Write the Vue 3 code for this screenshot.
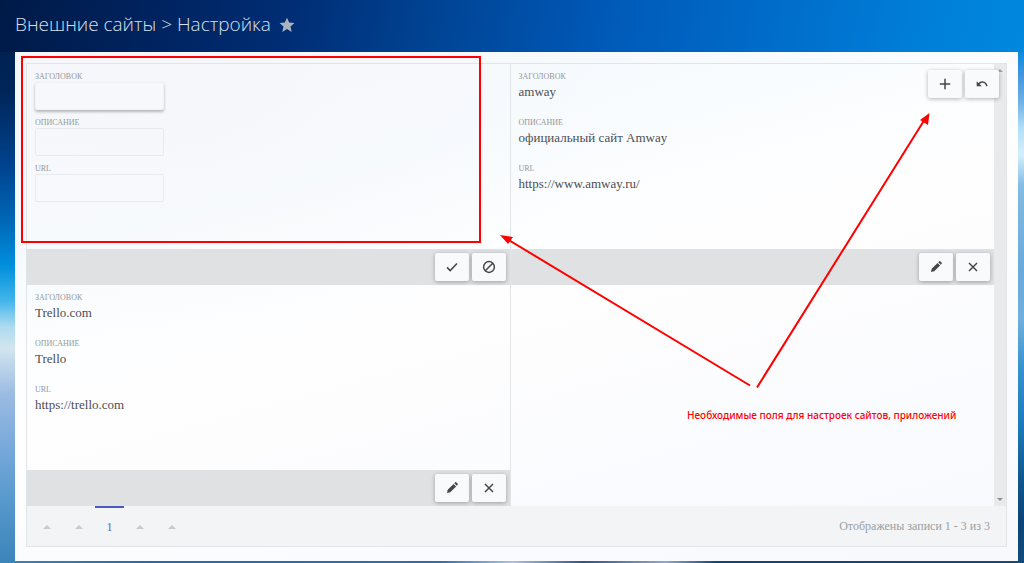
<script setup>
import { ref } from 'vue'

const form = ref({ title: '', description: '', url: '' })
const fields = [
  { key: 'title', label: 'Заголовок' },
  { key: 'description', label: 'Описание' },
  { key: 'url', label: 'URL' }
]
const sites = [
  { title: 'amway', description: 'официальный сайт Amway', url: 'https://www.amway.ru/' },
  { title: 'Trello.com', description: 'Trello', url: 'https://trello.com' }
]
</script>

<template>
  <div class="page">
    <header class="header">
      <h1>Внешние сайты &gt; Настройка</h1>
      <button class="star" type="button" aria-label="В избранное">
        <svg viewBox="0 0 16 16" width="16" height="16"><path d="M8 .8 10.2 5.6 15.4 6.1 11.5 9.6 12.7 14.9 8 12.1 3.3 14.9 4.5 9.6.6 6.1 5.8 5.6Z" /></svg>
      </button>
    </header>

    <main class="panel">
      <section class="list">
        <div class="scroll-area">
          <div class="cards">
            <form class="card" @submit.prevent>
              <div class="card-body">
                <div v-for="f in fields" :key="f.key" class="field">
                  <label class="caption" :for="f.key">{{ f.label }}</label>
                  <input :id="f.key" v-model="form[f.key]" type="text" :class="{ raised: f.key === 'title' }" />
                </div>
              </div>
              <div class="card-actions">
                <button class="tool" type="submit" aria-label="Сохранить">
                  <svg viewBox="0 0 16 16"><path class="line" d="M3 8.4 6.2 11.6 13 4.6" /></svg>
                </button>
                <button class="tool" type="reset" aria-label="Отмена">
                  <svg viewBox="0 0 16 16"><circle class="line" cx="8" cy="8" r="5.4" /><path class="line" d="M4.3 11.7 11.7 4.3" /></svg>
                </button>
              </div>
            </form>

            <article v-for="s in sites" :key="s.url" class="card">
              <dl class="card-body">
                <div v-for="f in fields" :key="f.key" class="field">
                  <dt class="caption">{{ f.label }}</dt>
                  <dd>{{ s[f.key] }}</dd>
                </div>
              </dl>
              <div class="card-actions">
                <button class="tool" type="button" aria-label="Изменить">
                  <svg viewBox="0 0 16 16"><path d="M3 13 3.7 9.8 9.6 3.9 12.1 6.4 6.2 12.3ZM10.3 3.2 11.2 2.3Q11.7 1.9 12.2 2.3L13.7 3.8Q14.1 4.3 13.7 4.8L12.8 5.7Z" /></svg>
                </button>
                <button class="tool" type="button" aria-label="Удалить">
                  <svg viewBox="0 0 16 16"><path class="line" d="M4 4 12 12M12 4 4 12" /></svg>
                </button>
              </div>
            </article>
          </div>
          <div class="scrollbar">
            <i class="arrow up"></i>
            <i class="arrow down"></i>
          </div>
          <div class="floating">
            <button class="tool" type="button" aria-label="Добавить">
              <svg viewBox="0 0 16 16"><path class="line" d="M8 2.8V13.2M2.8 8H13.2" /></svg>
            </button>
            <button class="tool" type="button" aria-label="Вернуть">
              <svg viewBox="0 0 16 16"><path class="line" d="M4.3 8.2C7.5 4.8 11.8 5.4 12.9 10.2" /><path d="M2.7 5.2V10.2H7.8Z" /></svg>
            </button>
          </div>
        </div>

        <footer class="pager">
          <nav class="pages">
            <button type="button" aria-label="Первая"><i class="tri"></i></button>
            <button type="button" aria-label="Предыдущая"><i class="tri"></i></button>
            <button type="button" class="current">1</button>
            <button type="button" aria-label="Следующая"><i class="tri"></i></button>
            <button type="button" aria-label="Последняя"><i class="tri"></i></button>
          </nav>
          <span class="total">Отображены записи 1 - 3 из 3</span>
        </footer>
      </section>
    </main>

    <div class="frame"></div>
    <svg class="arrows" width="1024" height="563" viewBox="0 0 1024 563">
      <path class="shaft" d="M750 385.500 507 239M757 387.500 925 119" />
      <path class="head" d="M500 235 513 237 508 244ZM929.500 113 928 125 920 120Z" />
    </svg>
    <p class="note">Необходимые поля для настроек сайтов, приложений</p>
  </div>
</template>

<style>
body {
  margin: 0;
}
</style>

<style scoped>
.page {
  position: relative;
  box-sizing: border-box;
  display: flex;
  flex-direction: column;
  min-height: 100vh;
  padding: 0 6px 2px 15px;
  font-family: "Liberation Serif", "Times New Roman", serif;
  color: #4c4f53;
  background:
    linear-gradient(101deg, #001a48 0, #00215a 12%, #002d74 28%, #004393 42%, #0058b6 58%, #006bc9 74%, #007fd8 90%, #0088de 100%) left top / 100% 52px no-repeat,
    linear-gradient(#0076ce 0, #078ade 50px, #3d93de 72px, #6aaee5 100px, #b6e0f7 130px, #d4effb 155px, #83bce4 185px, #6aa9dc 270px, #6eb0df 320px, #3491ce 370px, #1e7dbe 420px, #105a91 475px, #0a4478 520px, #124c7c 100%) right top / 6px 100% no-repeat,
    linear-gradient(#001d4d 0, #002558 90px, #00428e 165px, #0067b6 220px, #008edc 265px, #40b4ea 300px, #abdaef 326px, #d2e5ef 348px, #9bbbe2 395px, #76a8da 450px, #5899cd 500px, #3b84b9 100%) left top / 16px 100% no-repeat,
    linear-gradient(90deg, #3b84b9, #216cae 15%, #2c6fb0 43%, #a8c4df 50%, #2d5686 57%, #8fa9c7 65%, #0c467b 70%, #124c7c) left bottom / 100% 4px no-repeat,
    #0060bb;
}

.header {
  display: flex;
  align-items: center;
  gap: 8px;
  height: 52px;
  padding-bottom: 4px;
  box-sizing: border-box;
}

h1 {
  margin: 0;
  font: 300 19px/28px "Open Sans", "Noto Sans", sans-serif;
  color: #d9e0ea;
}

button {
  font: inherit;
  border: 0;
  padding: 0;
  background: none;
}

.star {
  display: flex;
  padding-top: 2px;
}

.star svg {
  fill: #aab4bc;
}

.panel {
  flex: 1;
  display: flex;
  padding: 11px 11px 14px 11px;
  background:
    radial-gradient(ellipse at 12% 0, rgba(246, 246, 250, 0.9) 0, rgba(246, 248, 252, 0) 40%),
    linear-gradient(165deg, #f5f9fd 0, #f7fbfe 25%, #fdfeff 42%, #fdfdfe 60%, #f9fbfe 78%, #f7f9fc 100%);
}

.list {
  flex: 1;
  display: flex;
  flex-direction: column;
  border: 1px solid #e2e5e8;
}

.scroll-area {
  position: relative;
  flex: 1;
  display: flex;
}

.cards {
  flex: 1;
  display: grid;
  grid-template-columns: 1fr 1fr;
  grid-template-rows: 1fr 1fr;
}

.card {
  display: flex;
  flex-direction: column;
  margin: 0;
}

.card:nth-child(odd) {
  border-right: 1px solid #e2e5e8;
}

.card-body {
  flex: 1;
  margin: 0;
  padding: 8px 7px 0 8px;
}

.field {
  height: 46px;
}

.caption {
  display: block;
  font-size: 8px;
  line-height: 10px;
  text-transform: uppercase;
  color: #94979b;
}

dd {
  margin: 0;
  font-size: 13px;
  line-height: 20px;
}

input {
  display: block;
  box-sizing: border-box;
  width: 129px;
  height: 28px;
  padding: 0 6px;
  border: 1px solid #e8ebee;
  border-radius: 2px;
  background: transparent;
  font: inherit;
  font-size: 13px;
  outline: none;
}

input.raised {
  border-color: #f0f1f4;
  background: #f7f8fb;
  box-shadow: 0 2px 3px rgba(0, 0, 0, 0.26);
}

.card-actions {
  display: flex;
  justify-content: flex-end;
  align-items: center;
  gap: 3px;
  height: 36px;
  padding-right: 4px;
  background: #dfe1e2;
}

.tool {
  display: flex;
  align-items: center;
  justify-content: center;
  width: 34px;
  height: 28px;
  border-radius: 2px;
  background: #f9fafb;
  box-shadow: 0 1px 4px rgba(0, 0, 0, 0.3);
}

.tool svg {
  width: 16px;
  height: 16px;
  fill: #43464a;
}

.tool .line {
  fill: none;
  stroke: #43464a;
  stroke-width: 1.5;
}

.scrollbar {
  display: flex;
  flex-direction: column;
  justify-content: space-between;
  align-items: center;
  box-sizing: border-box;
  width: 12px;
  padding: 5px 0;
  background: #e8eaec;
}

.arrow {
  border: 3px solid transparent;
}

.up {
  border-top: 0;
  border-bottom-color: #a1a4a8;
}

.down {
  border-bottom: 0;
  border-top-color: #8d9094;
}

.floating {
  position: absolute;
  top: 6px;
  right: 7px;
  display: flex;
  gap: 3px;
}

.pager {
  display: flex;
  justify-content: space-between;
  height: 40px;
  padding: 0 16px 0 4px;
  font-size: 12px;
  line-height: 40px;
  color: #9b9ea2;
  background: #f2f4f6;
}

.pages {
  display: flex;
}

.pages button {
  display: flex;
  align-items: center;
  justify-content: center;
  width: 32px;
  border-top: 2px solid transparent;
}

.pages .current {
  width: 29px;
  border-top-color: #4a59bd;
  color: #5a68bd;
}

.tri {
  border: 4px solid transparent;
  border-top: 0;
  border-bottom-color: #c8cacc;
}

.frame {
  position: absolute;
  left: 21px;
  top: 56px;
  width: 456px;
  height: 183px;
  border: 2px solid #f00;
}

.arrows {
  position: absolute;
  left: 0;
  top: 0;
  pointer-events: none;
}

.shaft {
  fill: none;
  stroke: #f00;
  stroke-width: 2;
}

.head {
  fill: #f00;
}

.note {
  position: absolute;
  left: 687px;
  top: 407px;
  margin: 0;
  font: 500 10px/16px "Noto Sans", "Open Sans", sans-serif;
  color: #f00;
  white-space: nowrap;
}
</style>
